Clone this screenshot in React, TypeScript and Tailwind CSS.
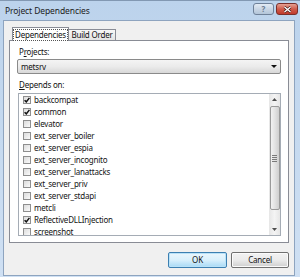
import { ReactNode } from "react";

const items: [string, boolean][] = [
  ["backcompat", true],
  ["common", true],
  ["elevator", false],
  ["ext_server_boiler", false],
  ["ext_server_espia", false],
  ["ext_server_incognito", false],
  ["ext_server_lanattacks", false],
  ["ext_server_priv", false],
  ["ext_server_stdapi", false],
  ["metcli", false],
  ["ReflectiveDLLInjection", true],
  ["screenshot", false],
];

function CheckBox({ checked }: { checked: boolean }) {
  return (
    <div className="w-[8px] h-[8px] border border-[#8f8f8f] bg-gradient-to-br from-[#dcdcdc] to-[#fbfbfb] flex items-center justify-center shrink-0">
      {checked && (
        <svg width="6" height="6" viewBox="0 0 6 6">
          <path d="M0.6 3.2 L2.3 4.9 L5.4 0.9" stroke="#111" strokeWidth="1.5" fill="none" />
        </svg>
      )}
    </div>
  );
}

function Triangle({ up }: { up?: boolean }) {
  return (
    <svg width="5" height="3" viewBox="0 0 5 3">
      <path d={up ? "M0 3 L2.5 0 L5 3 Z" : "M0 0 L5 0 L2.5 3 Z"} fill="#4d4d4d" />
    </svg>
  );
}

function WinButton({ children, primary }: { children: ReactNode; primary?: boolean }) {
  return (
    <div
      className={
        primary
          ? "w-[59px] h-[16px] rounded-[2px] border border-[#3c7fb1] bg-gradient-to-b from-[#eaf6fd] via-[#d9f0fc] to-[#a7d9f5] flex items-center justify-center shadow-[inset_0_0_0_1px_#b9e2f8]"
          : "w-[58px] h-[16px] rounded-[2px] border border-[#707070] bg-gradient-to-b from-[#f2f2f2] via-[#ebebeb] to-[#cfcfcf] flex items-center justify-center shadow-[inset_0_0_0_1px_#fbfbfb]"
      }
    >
      <span className="text-[8px] tracking-[-0.2px] text-[#111]">{children}</span>
    </div>
  );
}

export default function App() {
  return (
    <div
      className="w-[300px] h-[277px] overflow-hidden bg-gradient-to-b from-[#bcd3ec] to-[#cfe0f3] border-t border-[#8298b2] flex flex-col"
      style={{ fontFamily: '"Noto Sans", "Open Sans", sans-serif' }}
    >
      {/* title bar */}
      <div className="h-[19px] flex items-start pl-[5px] pr-[2px]">
        <span className="text-[8.5px] tracking-[-0.1px] leading-[19px] text-[#1b1b1b]">Project Dependencies</span>
        <div className="ml-auto mt-[2px] flex gap-[2px]">
          <div className="w-[21px] h-[12px] rounded-[3px] border border-[#6f8199] bg-gradient-to-b from-[#e3ebf4] via-[#c9d6e5] to-[#b3c5d9] flex items-center justify-center">
            <span className="text-[8px] leading-none font-bold text-[#6a7c92]">?</span>
          </div>
          <div className="w-[22px] h-[12px] rounded-[3px] border border-[#7a2f2a] bg-gradient-to-b from-[#e5a093] via-[#cf5b4b] to-[#c0392b] flex items-center justify-center">
            <svg width="9" height="7" viewBox="0 0 9 7">
              <path d="M1.5 1 L7.5 6 M7.5 1 L1.5 6" stroke="#3b1512" strokeWidth="2.6" />
              <path d="M1.5 1 L7.5 6 M7.5 1 L1.5 6" stroke="#fff" strokeWidth="1.4" />
            </svg>
          </div>
        </div>
      </div>

      {/* dialog body */}
      <div className="ml-[3px] mr-[5px] h-[256px] bg-[#f0f0f0] border border-[#8ea4bf] px-[5px] pt-[6px] flex flex-col text-[8px] tracking-[-0.2px] text-[#111]">
        {/* tabs */}
        <div className="flex items-end pl-[3px] h-[13px] relative z-10">
          <div className="w-[57px] h-[14px] -mb-px border border-b-0 border-[#898c95] bg-white flex items-center justify-center">
            <span className="whitespace-nowrap leading-[10px] px-px border border-dotted border-[#555]">Dependencies</span>
          </div>
          <div className="w-[47px] h-[11px] border border-l-0 border-b-0 border-[#898c95] bg-gradient-to-b from-[#f7f7f7] to-[#e3e3e3] flex items-center justify-center">
            <span className="whitespace-nowrap">Build Order</span>
          </div>
        </div>

        {/* tab panel */}
        <div className="h-[203px] border border-[#898c95] bg-white px-[7px] pt-[5px] flex flex-col">
          <div className="h-[12px] leading-[12px] pl-[2px]">
            P<span className="underline">r</span>ojects:
          </div>
          <div className="mt-px h-[15px] rounded-[2px] border border-[#8a8a8a] bg-gradient-to-b from-[#f4f4f4] via-[#ebebeb] to-[#d8d8d8] flex items-center pl-[3px] pr-[3px]">
            <span>metsrv</span>
            <div className="ml-auto">
              <svg width="6" height="3" viewBox="0 0 6 3">
                <path d="M0 0 L6 0 L3 3 Z" fill="#111" />
              </svg>
            </div>
          </div>
          <div className="mt-[5px] h-[12px] leading-[12px] pl-[2px]">
            <span className="underline">D</span>epends on:
          </div>
          <div className="mt-[2px] ml-px h-[143px] border border-[#a5acb5] bg-white flex overflow-hidden">
            <div className="flex-1 flex flex-col">
              {items.map(([name, checked]) => (
                <div key={name} className="h-[12px] shrink-0 flex items-center pl-[4px] gap-[3px]">
                  <CheckBox checked={checked} />
                  <span className="leading-[12px] whitespace-nowrap text-[#141414]">{name}</span>
                </div>
              ))}
            </div>
            {/* scrollbar */}
            <div className="w-[11px] bg-gradient-to-r from-[#e6e6e6] via-[#f4f4f4] to-[#e6e6e6] flex flex-col items-center">
              <div className="h-[11px] w-full flex items-center justify-center">
                <Triangle up />
              </div>
              <div className="mt-px w-[10px] h-[104px] rounded-[2px] border border-[#9a9a9a] bg-gradient-to-r from-[#f2f2f2] via-[#e2e2e2] to-[#cfcfcf] flex flex-col items-center justify-center gap-px">
                <div className="w-[5px] h-px bg-[#7a7a7a]" />
                <div className="w-[5px] h-px bg-[#7a7a7a]" />
                <div className="w-[5px] h-px bg-[#7a7a7a]" />
                <div className="w-[5px] h-px bg-[#7a7a7a]" />
              </div>
              <div className="mt-auto h-[11px] w-full flex items-center justify-center">
                <Triangle />
              </div>
            </div>
          </div>
        </div>

        {/* buttons */}
        <div className="mt-[9px] flex justify-end gap-[4px]">
          <WinButton primary>OK</WinButton>
          <WinButton>Cancel</WinButton>
        </div>
      </div>
    </div>
  );
}
